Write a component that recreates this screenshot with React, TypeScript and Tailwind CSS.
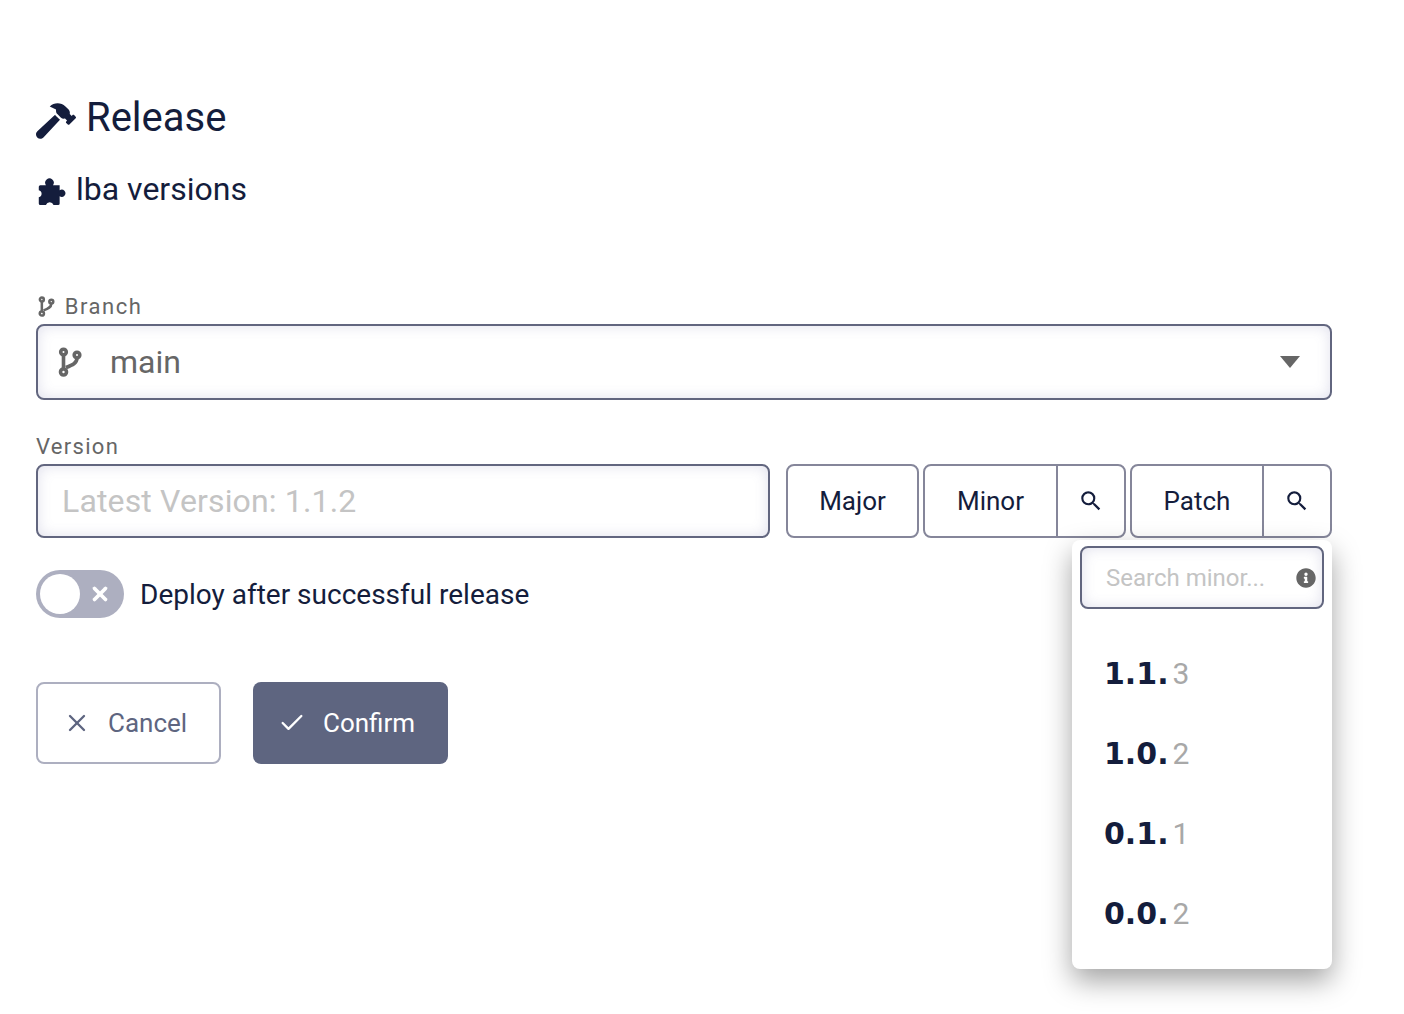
import React from 'react';
import { FaHammer, FaInfoCircle } from 'react-icons/fa';
import { MdSearch } from 'react-icons/md';
import { Check, X } from 'lucide-react';

const BranchIcon = ({ height, className }: { height: number; className?: string }) => (
  <svg width={height * 0.8} height={height} viewBox="0 0 24 30" fill="none" stroke="currentColor" strokeWidth={3.6} className={className}>
    <circle cx="5.5" cy="5" r="2.8" />
    <circle cx="5.5" cy="25" r="3" />
    <circle cx="19" cy="8" r="2.8" />
    <path d="M5.5 8v14M19 11c0 5-4.5 7-11 9.5" />
  </svg>
);

const PuzzleIcon = ({ className }: { className?: string }) => (
  <svg width="30" height="28" viewBox="0 0 29 27.5" fill="currentColor" className={className}>
    <path d="M4 7H9.5A4.2 4.2 0 1 1 16.5 7H23V12A3.6 3.6 0 1 1 23 18V25A1.5 1.5 0 0 1 21.5 26.5H17A4 4 0 0 0 9.5 26.5H4A1.5 1.5 0 0 1 2.5 25V19A3.6 3.6 0 0 0 2.5 12V8.5A1.5 1.5 0 0 1 4 7Z" />
  </svg>
);

const minorVersions = [
  ['1.1.', '3'],
  ['1.0.', '2'],
  ['0.1.', '1'],
  ['0.0.', '2'],
];

const fieldClass = 'border-2 border-[#62667f] rounded-lg bg-white shadow-[inset_0_0_14px_rgba(98,102,160,0.2)]';

export default function App() {
  return (
    <div className="w-[1404px] h-[1014px] bg-white pl-[36px] pr-[72px] pt-[95px] text-[#141d3c] font-['Roboto','Noto_Sans',sans-serif] overflow-hidden">
      <h1 className="flex items-center h-[46px] text-[40px] font-normal">
        <FaHammer size={40} className="mr-[10px] mt-[5px]" />
        <span>Release</span>
      </h1>
      <h2 className="flex items-center h-[40px] mt-[28px] text-[32px] font-normal">
        <PuzzleIcon className="mr-[10px] mt-[5px] shrink-0" />
        <span>lba versions</span>
      </h2>

      <label className="flex items-center h-[28px] mt-[83px] text-[22px] tracking-[1.5px] text-[#666666]">
        <BranchIcon height={21} className="ml-[2px] mr-[10px]" />
        Branch
      </label>
      <div className={`flex items-center h-[76px] mt-[4px] pl-[20px] pr-[30px] text-[#666666] text-[32px] ${fieldClass}`}>
        <BranchIcon height={30} />
        <span className="ml-[28px] flex-1">main</span>
        <svg width="20" height="12" viewBox="0 0 20 12" className="text-[#666666]">
          <path d="M0 0h20L10 12z" fill="currentColor" />
        </svg>
      </div>

      <label className="flex items-center h-[28px] mt-[32px] text-[22px] tracking-[1.3px] text-[#666666]">Version</label>
      <div className="relative flex h-[74px] mt-[4px]">
        <div className={`flex items-center w-[734px] pl-[24px] text-[32px] tracking-[0.15px] text-[#c4c4c4] ${fieldClass}`}>
          Latest Version: 1.1.2
        </div>
        <button className="ml-[16px] w-[133px] border-2 border-[#85869a] rounded-lg text-[26px]">Major</button>
        <div className="flex ml-[4px] w-[203px] border-2 border-[#85869a] rounded-lg text-[26px]">
          <button className="w-[131px]">Minor</button>
          <button className="flex-1 flex items-center justify-center border-l-2 border-[#85869a]">
            <MdSearch size={26} />
          </button>
        </div>
        <div className="flex ml-[4px] w-[202px] border-2 border-[#85869a] rounded-lg text-[26px]">
          <button className="w-[130px]">Patch</button>
          <button className="flex-1 flex items-center justify-center border-l-2 border-[#85869a]">
            <MdSearch size={26} />
          </button>
        </div>

        <div className="absolute right-0 top-[76px] w-[260px] h-[429px] bg-white rounded-lg px-[8px] pt-[6px] shadow-[0_12px_28px_rgba(0,0,0,0.36)] z-10">
          <div className={`flex items-center h-[63px] pl-[24px] pr-[6px] text-[24px] text-[#c4c4c4] ${fieldClass}`}>
            <span className="flex-1">Search minor...</span>
            <FaInfoCircle size={20} className="text-[#666666]" />
          </div>
          <ul className="mt-[24px]">
            {minorVersions.map(([base, last]) => (
              <li key={base + last} className="flex items-center h-[80px] pl-[24px]">
                <span className="font-['DejaVu_Sans',sans-serif] font-bold text-[#141d3c] text-[30px]">{base}</span>
                <span className="ml-[4px] text-[#a8a8a8] text-[30px]">{last}</span>
              </li>
            ))}
          </ul>
        </div>
      </div>

      <div className="flex items-center mt-[32px] h-[48px]">
        <div className="flex items-center justify-between w-[88px] h-[48px] rounded-full bg-[#adafc0] pl-[4px] pr-[13px]">
          <span className="w-[40px] h-[40px] rounded-full bg-white" />
          <X size={22} strokeWidth={4} className="text-white" />
        </div>
        <span className="ml-[16px] pt-[2px] text-[28px]">Deploy after successful release</span>
      </div>

      <div className="flex mt-[64px] gap-[32px]">
        <button className="flex items-center w-[185px] h-[82px] border-2 border-[#adafc0] rounded-lg pl-[25px] text-[26px] text-[#5e6580]">
          <X size={28} strokeWidth={2} />
          <span className="ml-[17px]">Cancel</span>
        </button>
        <button className="flex items-center w-[195px] h-[82px] rounded-lg bg-[#5e6580] pl-[25px] text-[26px] text-white">
          <Check size={28} strokeWidth={2} />
          <span className="ml-[17px]">Confirm</span>
        </button>
      </div>
    </div>
  );
}
